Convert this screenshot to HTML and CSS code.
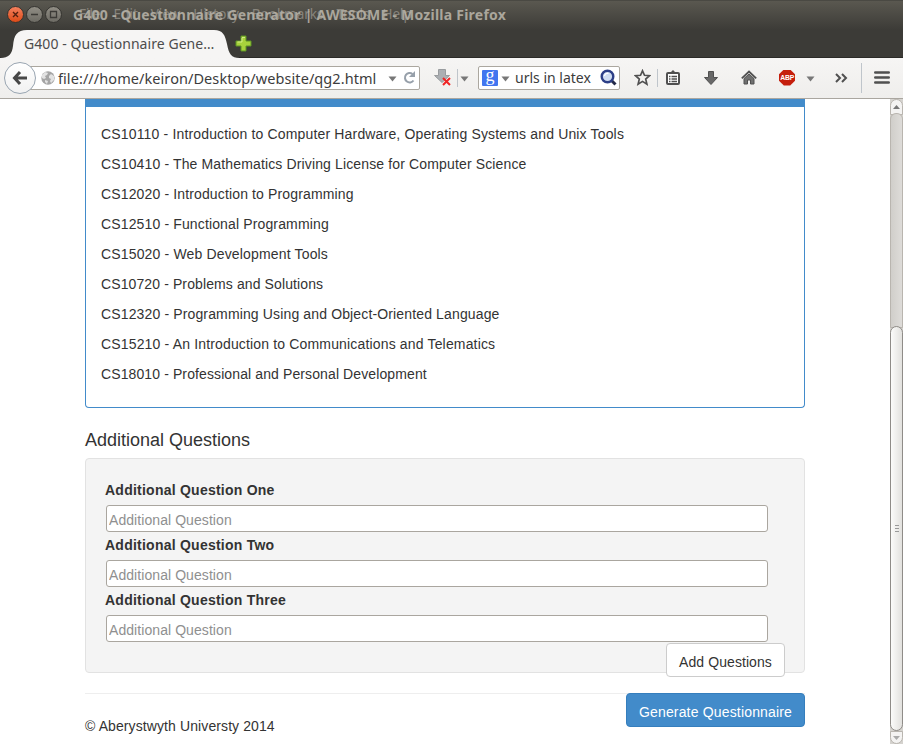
FILE: index.html
```
<!DOCTYPE html>
<html lang="en">
<head>
<meta charset="utf-8">
<title>G400 - Questionnaire Generator | AWESOME</title>
<link rel="stylesheet" href="styles.css">
</head>
<body>
<header class="titlebar">
  <div class="caption">
    <svg class="controls" width="60" height="28" viewBox="0 0 60 28">
      <defs>
        <linearGradient id="orange" x2="0" y2="1"><stop stop-color="#f58260"/><stop offset="1" stop-color="#dd4915"/></linearGradient>
        <linearGradient id="grey" x2="0" y2="1"><stop stop-color="#928f86"/><stop offset="1" stop-color="#6c6a63"/></linearGradient>
      </defs>
      <g stroke="#34332f"><circle cx="11.5" cy="14.5" r="8" fill="url(#orange)"/><circle cx="30.500" cy="14.500" r="8" fill="url(#grey)"/><circle cx="49.500" cy="14.500" r="8" fill="url(#grey)"/></g>
      <path d="M9 12l5 5M14 12l-5 5" stroke="#54200f" stroke-width="1.4"/>
      <path d="M27 14.500h7M46.500 11.500h6v6h-6z" stroke="#3c3b37" stroke-width="1.300" fill="none"/>
    </svg>
    <span class="title">G400 - Questionnaire Generator | AWESOME - Mozilla Firefox</span>
    <nav class="menu"><span>File</span><span>Edit</span><span>View</span><span>History</span><span>Bookmarks</span><span>Tools</span><span>Help</span></nav>
  </div>
  <div class="tabs">
    <div class="tab">
      <svg class="tab-shape" width="240" height="28" viewBox="0 0 240 28"><path d="M0 28C9 28 12 24 13 16C14 5 17 0 27 0H214C223 0 225 5 227 14C229 24 231 28 240 28z" fill="#f6f5f4"/></svg>
      <span class="tab-label">G400 - Questionnaire Gene…</span>
    </div>
    <svg class="plus" width="17" height="17" viewBox="0 0 17 17"><path d="M6 1h5v5h5v5h-5v5H6v-5H1V6h5z" fill="#a8d13c" stroke="#5c9424"/><path d="M7 2.500h3M2.500 7H7V3" stroke="#d2ec86" fill="none"/></svg>
  </div>
</header>
<div class="toolbar">
  <div class="back"><svg width="16" height="16" viewBox="0 0 16 16"><path d="M8 2L2.500 8L8 14M3 8H15" fill="none" stroke="#474747" stroke-width="3"/></svg></div>
  <div class="urlbar">
    <svg class="globe" width="14" height="14" viewBox="0 0 14 14"><circle cx="7" cy="7" r="6.700" fill="#a5a5a5"/><path d="M1 4L4 1L7 2L6 4L4 5L5 7L3 8L1 7zM8 5L10 3L13 5V9L10 12L9 10L10 8L8 7zM4 9L7 10L6 13L4 11z" fill="#e2e2e2"/></svg>
    <span class="url">file:///home/keiron/Desktop/website/qg2.html</span>
    <svg class="url-drop" width="9" height="6"><path d="M.5 .5h8l-4 5z" fill="#777"/></svg>
    <svg class="reload" width="13" height="13" viewBox="0 0 13 13"><path d="M9.500 3A4.700 4.700 0 1 0 10.500 9.500" fill="none" stroke="#97a0aa" stroke-width="2"/><path d="M12 0v6H6z" fill="#97a0aa"/></svg>
  </div>
  <svg class="blocked" width="18" height="17" viewBox="0 0 18 17"><path d="M4.500 .5h7v6h4L8 13.500L.5 6.500h4z" fill="#acafb3" stroke="#999c9f"/><path d="M9 9l7 7M16 9l-7 7" stroke="#ef2525" stroke-width="2"/></svg>
  <i class="sep sep-a"></i>
  <svg class="drop-a" width="9" height="6"><path d="M.5 .5h8l-4 5z" fill="#777"/></svg>
  <div class="search">
    <span class="google"><span>g</span></span>
    <svg class="drop-b" width="9" height="6"><path d="M.5 .5h8l-4 5z" fill="#777"/></svg>
    <span class="query">urls in latex</span>
    <svg class="magnifier" width="17" height="17" viewBox="0 0 17 17"><path d="M11 11l4.500 4.500" stroke="#242b49" stroke-width="3"/><circle cx="7.500" cy="7.500" r="5.800" fill="#cfdcf1" stroke="#2d3f87" stroke-width="2.400"/><path d="M4.500 7a3 3 0 0 1 4-2.500" stroke="#fff" stroke-width="1.300" fill="none"/></svg>
  </div>
  <svg class="star" width="17" height="17" viewBox="0 0 17 17"><path d="M8.500 1.800l2 4.500 5 .4-3.800 3.400 1.200 5-4.400-2.700-4.400 2.700 1.200-5-3.800-3.400 5-.4z" fill="none" stroke="#505050" stroke-width="1.700"/></svg>
  <i class="sep sep-b"></i>
  <svg class="clip" width="14" height="15" viewBox="0 0 14 15"><rect x="1" y="3" width="12" height="11" rx="1" fill="#fff" stroke="#505050" stroke-width="2"/><path d="M3 3.500V2h2l2-2 2 2h2v1.500z" fill="#505050"/><path d="M3 6.500h1.500M5.500 6.500H11M3 9h1.500M5.500 9H11M3 11.500h1.500M5.500 11.500H11" stroke="#505050" stroke-width="1.300"/></svg>
  <svg class="down" width="14" height="14" viewBox="0 0 14 14"><path d="M4.500 .5h5v6h4L7 13.500L.5 6.500h4z" fill="#686868" stroke="#505050"/></svg>
  <svg class="home" width="16" height="15" viewBox="0 0 16 15"><path d="M3 8.500L8 4l5 4.500V14H9.500v-4h-3v4H3z" fill="#707070" stroke="#505050"/><path d="M.8 8.300L8 1.500l7.200 6.800" fill="none" stroke="#505050" stroke-width="1.800"/></svg>
  <div class="abp"><span>ABP</span></div>
  <svg class="drop-c" width="9" height="6"><path d="M.5 .5h8l-4 5z" fill="#777"/></svg>
  <svg class="more" width="13" height="10" viewBox="0 0 13 10"><path d="M1 1l4 4-4 4M7 1l4 4-4 4" fill="none" stroke="#505050" stroke-width="2"/></svg>
  <i class="sep sep-c"></i>
  <svg class="burger" width="16" height="13" viewBox="0 0 16 13"><path d="M1.300 1.500h13.400M1.300 6.500h13.400M1.300 11.500h13.400" stroke="#505050" stroke-width="2.600" stroke-linecap="round"/></svg>
</div>
<div class="viewport">
  <main class="container">
    <section class="panel">
      <div class="panel-heading"></div>
      <div class="panel-body">
        <p class="wider">CS10110 - Introduction to Computer Hardware, Operating Systems and Unix Tools</p>
        <p>CS10410 - The Mathematics Driving License for Computer Science</p>
        <p>CS12020 - Introduction to Programming</p>
        <p>CS12510 - Functional Programming</p>
        <p class="wider">CS15020 - Web Development Tools</p>
        <p class="tighter">CS10720 - Problems and Solutions</p>
        <p>CS12320 - Programming Using and Object-Oriented Language</p>
        <p class="wider">CS15210 - An Introduction to Communications and Telematics</p>
        <p class="tighter">CS18010 - Professional and Personal Development</p>
      </div>
    </section>
    <h4>Additional Questions</h4>
    <form class="well">
      <label for="q1">Additional Question One</label>
      <input id="q1" placeholder="Additional Question">
      <label for="q2">Additional Question Two</label>
      <input id="q2" placeholder="Additional Question">
      <label for="q3">Additional Question Three</label>
      <input id="q3" placeholder="Additional Question">
      <button type="button" class="btn">Add Questions</button>
    </form>
    <footer>
      <p>© Aberystwyth Universty 2014</p>
      <button type="button" class="btn btn-primary">Generate Questionnaire</button>
    </footer>
  </main>
  <div class="scrollbar">
    <div class="step"><svg width="7" height="4"><path d="M0 4h7L3.500 0z" fill="#777"/></svg></div>
    <div class="trough"></div>
    <div class="thumb"><i></i><i></i><i></i></div>
    <div class="step step-down"><svg width="7" height="4"><path d="M0 0h7L3.500 4z" fill="#aaa"/></svg></div>
  </div>
</div>
</body>
</html>
```
FILE: styles.css
```
* { box-sizing: border-box; }
body {
  margin: 0;
  width: 903px;
  height: 744px;
  overflow: hidden;
  background: #fff;
  color: #333;
  font: 14px/20px "Liberation Sans", Arial, sans-serif;
}
svg { display: block; flex: none; }
p, h4 { margin: 0; }

.titlebar {
  height: 58px;
  background: linear-gradient(#5a5850, #3c3b37 29px);
  border-top: 1px solid #4a4943;
  border-bottom: 1px solid #2b2a27;
  font-family: "Noto Sans", sans-serif;
  white-space: nowrap;
}
.caption { position: relative; display: flex; height: 29px; }
.controls { margin: -1px 9px 0 4px; }
.title { font-weight: 700; font-size: 14px; line-height: 27px; color: #aaa69c; letter-spacing: .24px; }
.menu {
  position: absolute;
  left: 79px;
  top: 0;
  display: flex;
  gap: 13px;
  font-size: 13.500px;
  line-height: 27px;
  color: #b7b3aa;
  opacity: .55;
}
.tabs { display: flex; height: 28px; }
.tab { position: relative; width: 235px; height: 28px; }
.tab-shape { position: absolute; left: 0; top: 0; }
.tab-label { position: relative; display: block; padding-left: 24px; font-size: 14px; line-height: 28px; letter-spacing: .06px; color: #4c4c4c; }
.plus { margin-top: 5px; }

.toolbar {
  display: flex;
  align-items: center;
  height: 41px;
  padding-bottom: 1px;
  background: linear-gradient(#f6f5f4, #efeeec);
  border-bottom: 1px solid #aaa69f;
  font-family: "Noto Sans", sans-serif;
  white-space: nowrap;
}
.back {
  position: relative;
  z-index: 1;
  display: flex;
  align-items: center;
  justify-content: center;
  flex: none;
  width: 32px;
  height: 32px;
  margin-left: 4px;
  border: 1px solid #99a5b1;
  border-radius: 50%;
  background: linear-gradient(#fff, #f1f1f1);
}
.urlbar, .search {
  display: flex;
  align-items: center;
  flex: none;
  height: 24px;
  background: #fff;
  border: 1px solid #aba79f;
  border-radius: 2px;
  color: #3c3c3c;
  font-size: 14px;
}
.urlbar { width: 392px; margin-left: -8px; padding-left: 12px; }
.url { width: 318px; margin-left: 3px; font-size: 14.500px; letter-spacing: .07px; }
.url-drop { margin-left: 12px; margin-top: 2px; }
.reload { margin-left: 6px; }
.blocked { margin-left: 14px; }
.sep { flex: none; width: 1px; height: 18px; background: #bfc5cb; }
.sep-a { margin-left: 5px; }
.drop-a { margin-left: 2px; margin-top: 3px; }
.search { width: 142px; margin-left: 9px; padding-left: 3px; }
.google {
  width: 16px;
  height: 16px;
  background: #4276ef;
  border-radius: 1px;
  color: #fff;
  font: 18px/10px "Liberation Serif", serif;
  text-align: center;
}
.drop-b { margin-left: 3px; margin-top: 3px; }
.query { width: 78px; margin-left: 5px; }
.magnifier { margin-left: 7px; }
.star { margin-left: 14px; }
.sep-b { margin-left: 6px; }
.clip { margin-left: 8px; }
.down { margin-left: 24px; }
.home { margin-left: 23px; }
.abp {
  display: flex;
  align-items: center;
  justify-content: center;
  flex: none;
  width: 16px;
  height: 16px;
  margin-left: 22px;
  background: #c51e0c;
  clip-path: polygon(30% 0, 70% 0, 100% 30%, 100% 70%, 70% 100%, 30% 100%, 0 70%, 0 30%);
  color: #fff;
  font: 700 8px/16px "Liberation Sans Narrow", "Liberation Sans", sans-serif;
}
.abp span { transform: scaleX(.85); letter-spacing: -.2px; }
.drop-c { margin-left: 11px; margin-top: 3px; }
.more { margin-left: 20px; }
.sep-c { height: 30px; margin-left: 13px; }
.burger { margin-left: 12px; }

.viewport { display: flex; height: 645px; }
.container { width: 720px; margin-left: 85px; }
.panel {
  height: 309px;
  border: 1px solid #428bca;
  border-top: 0;
  border-radius: 0 0 4px 4px;
}
.panel-heading { height: 8px; background: #428bca; }
.panel-body { padding: 17px 15px; letter-spacing: .14px; }
.panel-body p { margin-bottom: 10px; white-space: nowrap; }
.wider { letter-spacing: .16px; }
.tighter { letter-spacing: .11px; }
h4 { margin: 22px 0 8px; font-size: 18px; line-height: 20px; font-weight: 400; }
.well {
  display: flex;
  flex-direction: column;
  height: 215px;
  padding: 20px 19px 0 20px;
  background: #f4f4f4;
  border: 1px solid #e2e2e2;
  border-radius: 4px;
}
label { flex: none; height: 26px; margin-left: -1px; font-weight: 700; line-height: 22px; letter-spacing: .24px; }
input {
  flex: none;
  width: 662px;
  height: 27px;
  margin-bottom: 2px;
  padding: 4px 2px 1px;
  border: 1px solid #aaa69f;
  border-radius: 3px;
  background: #fff;
  font: inherit;
  letter-spacing: .07px;
}
input::placeholder { color: #8f8f8f; opacity: 1; }
.btn {
  align-self: flex-end;
  flex: none;
  width: 119px;
  height: 34px;
  margin-top: -1px;
  padding: 3px 0 0;
  border: 1px solid #ccc;
  border-radius: 4px;
  background: #fff;
  color: #333;
  font: inherit;
  letter-spacing: .08px;
}
footer {
  display: flex;
  justify-content: space-between;
  margin-top: 20px;
  border-top: 1px solid #eee;
}
footer p { margin-top: 22px; letter-spacing: .1px; }
.btn-primary {
  align-self: flex-start;
  width: 179px;
  background: #428bca;
  border-color: #357ebd;
  color: #fff;
  letter-spacing: .17px;
}

.scrollbar {
  display: flex;
  flex-direction: column;
  width: 13px;
  margin-left: auto;
  background: #d5d3cf;
}
.step {
  display: flex;
  align-items: center;
  justify-content: center;
  height: 16px;
  border: 1px solid #b9b5af;
  border-radius: 7px 7px 0 0;
  background: #f4f3f2;
}
.trough {
  height: 215px;
  margin-top: -2px;
  border: 1px solid #b9b5af;
  border-radius: 6px 6px 0 0;
  background: linear-gradient(90deg, #d0ceca, #dedcd9);
}
.thumb {
  display: flex;
  flex-direction: column;
  align-items: center;
  justify-content: center;
  gap: 2px;
  height: 405px;
  margin-top: -2px;
  border: 1px solid #8f8c88;
  border-radius: 7px;
  background: linear-gradient(90deg, #fbfbfa, #e2e1de);
}
.thumb i { width: 4px; height: 1px; background: #999; }
.step-down { height: 13px; border-radius: 0 0 7px 7px; }
```
